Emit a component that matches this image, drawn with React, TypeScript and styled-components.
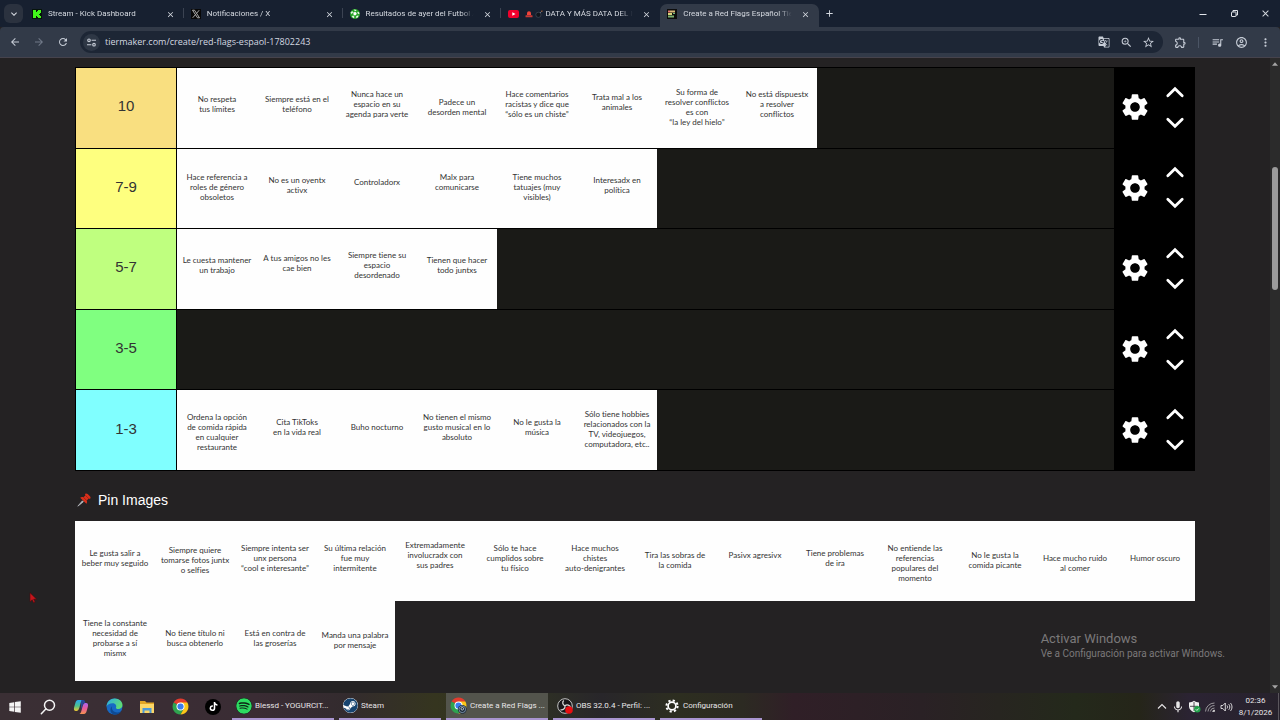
import React from "react";
import styled, { createGlobalStyle, css } from "styled-components";
import {
  MdSettings,
  MdArrowBack,
  MdArrowForward,
  MdRefresh,
  MdOutlineExtension,
  MdStarBorder,
  MdZoomIn,
  MdGTranslate,
  MdMoreVert,
  MdQueueMusic,
  MdOutlineAccountCircle,
  MdMic,
  MdClose,
  MdAdd,
  MdKeyboardArrowDown,
} from "react-icons/md";
import { FaSpotify, FaSteam, FaTiktok } from "react-icons/fa";

const ui = 'Roboto, "Noto Sans", sans-serif';
const addressFont = '"Open Sans", "Noto Sans", sans-serif';
const arial = '"Liberation Sans", Arial, sans-serif';

const Global = createGlobalStyle`
  *, *::before, *::after { box-sizing: border-box; }
  body { margin: 0; background: #242223; font-family: ${ui}; }
  button { padding: 0; border: 0; background: none; color: inherit; font: inherit; cursor: pointer; }
  svg { display: block; flex: none; }
`;

const Screen = styled.div`
  position: relative;
  display: flex;
  flex-direction: column;
  height: 100vh;
  overflow: hidden;
`;

/* ---------- browser chrome ---------- */

const TabStrip = styled.header`
  display: flex;
  flex: none;
  height: 27px;
  padding-left: 4px;
  background: #172030;
  color: #d5d9e0;
`;

const TabSearch = styled.button`
  display: grid;
  place-items: center;
  align-self: center;
  width: 19px;
  height: 19px;
  margin-right: 2px;
  border-radius: 6px;
  background: #2b323f;
`;

const Tabs = styled.div`
  display: flex;
  flex: 0 1 794px;
  min-width: 0;
`;

const Tab = styled.div<{ $active?: boolean; $divider?: boolean }>`
  position: relative;
  display: flex;
  align-items: center;
  flex: 1 1 0;
  gap: 6px;
  min-width: 0;
  height: 23px;
  margin-top: 4px;
  padding: 0 10px 4px 7px;
  ${(p) =>
    p.$active &&
    css`
      border-radius: 7px 7px 0 0;
      background: #323a48;
    `}
  ${(p) =>
    p.$divider &&
    css`
      &::after {
        content: "";
        position: absolute;
        right: 0;
        top: 4px;
        width: 1px;
        height: 10px;
        background: #3b4352;
      }
    `}
`;

const TabTitle = styled.span`
  display: flex;
  align-items: center;
  gap: 2px;
  flex: 1;
  min-width: 0;
  overflow: hidden;
  font-size: 8px;
  line-height: 12px;
  white-space: nowrap;
  mask-image: linear-gradient(to right, #000 86%, transparent 97%);
`;

const IconButton = styled.button<{ $size: number }>`
  display: grid;
  place-items: center;
  align-self: center;
  flex: none;
  width: ${(p) => p.$size}px;
  height: ${(p) => p.$size}px;
`;

const WindowControls = styled.div`
  display: flex;
  align-items: center;
  gap: 11px;
  margin-left: auto;
  padding-right: 5px;
`;

const Toolbar = styled.div`
  display: flex;
  align-items: center;
  flex: none;
  height: 31px;
  padding: 0 5px;
  border-bottom: 1px solid #46434c;
  border-radius: 4px 4px 0 0;
  background: #323a48;
  color: #c6ccd6;
`;

const NavGroup = styled.div`
  display: flex;
  gap: 4px;
  width: 75px;
`;

const Omnibox = styled.div`
  display: flex;
  align-items: center;
  flex: 1;
  height: 22px;
  padding: 0 5px 0 3px;
  border-radius: 11px;
  background: #1d2635;
`;

const SiteInfo = styled.button`
  display: grid;
  place-items: center;
  width: 17px;
  height: 17px;
  border-radius: 50%;
  background: #2e3745;
`;

const Address = styled.input`
  flex: 1;
  min-width: 0;
  padding: 0 0 0 5px;
  border: 0;
  outline: 0;
  background: none;
  color: #d3d8e0;
  font: 9px/14px ${addressFont};
`;

const BoxActions = styled.div`
  display: flex;
  gap: 2px;
`;

const ToolActions = styled.div`
  display: flex;
  align-items: center;
  gap: 4px;
  padding-left: 7px;
`;

const Rule = styled.span`
  width: 1px;
  height: 11px;
  margin: 0 4px;
  background: #4b5565;
`;

/* ---------- page ---------- */

const Viewport = styled.div`
  display: flex;
  flex: 1;
  min-height: 0;
  background: #242223;
`;

const Page = styled.main`
  flex: 1;
  min-width: 0;
  padding: 9px 75px 0;
  overflow: hidden;
`;

const TierList = styled.section`
  display: grid;
  grid-auto-rows: 1fr;
  gap: 1px;
  min-height: 404px;
  padding: 1px 0 1px 1px;
  background: #000;
`;

const TierRow = styled.div`
  display: grid;
  grid-template-columns: 100px 1fr 80px;
  column-gap: 1px;
  min-height: 79px;
`;

const TierLabel = styled.div<{ $color: string }>`
  display: grid;
  place-items: center;
  padding-bottom: 3px;
  background: ${(p) => p.$color};
  color: #333;
  font: 15px/20px ${arial};
`;

const Cards = styled.ul<{ $wrap?: boolean }>`
  display: flex;
  flex-wrap: ${(p) => (p.$wrap ? "wrap" : "nowrap")};
  min-width: 0;
  margin: 0;
  padding: 0;
  list-style: none;
  background: ${(p) => (p.$wrap ? "none" : "#1a1a17")};
`;

type Level = "high" | "mid" | "low" | "base";

const levelPadding: Record<Level, string> = {
  high: "0 0 12px",
  mid: "0 0 7px",
  low: "0 0 2px",
  base: "3px 0 0",
};

const Card = styled.li<{ $level: Level; $tall?: boolean }>`
  display: grid;
  place-items: center;
  flex: none;
  width: 80px;
  min-height: ${(p) => (p.$tall ? 80 : 79)}px;
  padding: ${(p) => levelPadding[p.$level]};
  background: #fefefe;
  color: #333;
  font: 8px/10px Lato, ${ui};
  font-variant-ligatures: none;
  text-align: center;
  white-space: pre;
`;

const RowTools = styled.div`
  display: grid;
  grid-template-columns: 39px 41px;
  align-items: center;
  justify-items: center;
  padding-bottom: 1px;
  color: #fff;
`;

const Arrows = styled.div`
  display: grid;
  gap: 13px;
`;

const ArrowButton = styled.button`
  display: grid;
  place-items: center;
  width: 20px;
  height: 18px;
`;

const PinHeading = styled.h2`
  display: flex;
  align-items: center;
  gap: 7px;
  margin: 0;
  padding: 20px 0 12px 2px;
  color: #fff;
  font: 14px/18px ${arial};
`;

const ScrollTrack = styled.div`
  display: flex;
  flex-direction: column;
  justify-content: space-between;
  align-items: center;
  position: relative;
  flex: none;
  width: 10px;
  padding: 4px 0;
  background: #2b2b2b;
`;

const ScrollThumb = styled.div`
  position: absolute;
  top: 109px;
  left: 2px;
  width: 6px;
  height: 123px;
  border-radius: 3px;
  background: #9c9c9c;
`;

const Watermark = styled.div`
  position: absolute;
  right: 55px;
  bottom: 59px;
  color: #7b797a;
`;

const WatermarkTitle = styled.div`
  font-size: 13px;
  line-height: 16px;
`;

const WatermarkText = styled.div`
  font-size: 10px;
  line-height: 14px;
`;

const Pointer = styled.div`
  position: absolute;
  left: 29px;
  top: 592px;
`;

/* ---------- taskbar ---------- */

const Taskbar = styled.footer`
  display: flex;
  align-items: stretch;
  flex: none;
  height: 27px;
  background: linear-gradient(
    to right,
    #3a2f34 0%,
    #3a2c34 20%,
    #332b2e 27%,
    #35351f 34%,
    #2e3024 42%,
    #28262a 47%,
    #2d2e20 53%,
    #2c2a22 58%,
    #301f27 62%,
    #2a2125 72%,
    #24291b 84%,
    #252519 89%,
    #2b2333 93%,
    #27222c 100%
  );
  color: #e8e6e8;
  font-size: 8px;
  line-height: 12px;
`;

const Launchers = styled.nav`
  display: flex;
  align-items: center;
  gap: 13px;
  padding: 0 9px 0 5px;
`;

const Tasks = styled.div`
  display: flex;
  gap: 5px;
  flex: 1;
  min-width: 0;
`;

const Task = styled.button<{ $active?: boolean }>`
  display: flex;
  align-items: center;
  gap: 3px;
  flex: none;
  width: 102px;
  padding-left: 4px;
  border-bottom: 2px solid #a995d0;
  background: ${(p) => (p.$active ? "#53544c" : "none")};
  white-space: nowrap;
`;

const Tray = styled.div`
  display: flex;
  align-items: center;
  gap: 2px;
  padding-right: 1px;
`;

const Clock = styled.time`
  width: 41px;
  font-size: 8px;
  line-height: 12px;
  text-align: center;
`;

const DesktopEdge = styled.span`
  width: 1px;
  height: 100%;
  background: #5a565c;
`;

/* ---------- drawings ---------- */

const KickIcon = () => (
  <svg width="10" height="10" viewBox="0 0 10 10">
    <rect width="10" height="10" fill="#06140a" />
    <path d="M1 1h3v2h1V2h1V1h3v3H8v1H7v1h1v1h1v2H6V8H5V7H4v2H1z" fill="#42f51b" />
  </svg>
);

const XIcon = () => (
  <svg width="10" height="10" viewBox="0 0 10 10">
    <rect width="10" height="10" fill="#080808" />
    <path d="M1.500 1.200h2l5 7.600h-2zM8.200 1.200 5.500 4.400M4.400 5.700 1.700 8.800" fill="none" stroke="#d0d0d0" strokeWidth=".8" />
  </svg>
);

const BallIcon = () => (
  <svg width="10" height="10" viewBox="0 0 10 10">
    <circle cx="5" cy="5" r="5" fill="#22a322" />
    <path d="M3.600 3.600 5.300 3l1.200 1.300-.7 1.700-1.900.1zM4.200.8l2 .4-.8.900zM1 3.500l1.200-1.200.5 1.400-1.200 1.100zM2 7.300l1.600-.4.500 1.700-1 .2zM6.500 7.300l1.700-.6-.6 1.600-1.300.5zM7.700 3l.9.200.6 1.600-1.200-.3z" fill="#fff" stroke="#fff" strokeWidth=".5" />
  </svg>
);

const YoutubeIcon = () => (
  <svg width="11" height="10" viewBox="0 0 11 10">
    <rect y="1" width="11" height="8" rx="2" fill="#f0002c" />
    <path d="M4.300 3.200v3.600L7.500 5z" fill="#fff" />
  </svg>
);

const TierIcon = () => (
  <svg width="10" height="10" viewBox="0 0 10 10">
    <rect width="10" height="10" fill="#0c0c0c" />
    <path d="M1 1.500h2v2H1z" fill="#e67a70" />
    <path d="M3 1.500h5v2H3z" fill="#d9b878" />
    <path d="M1 4h4v2H1z" fill="#d8d27a" />
    <path d="M6 4h2v1H6z" fill="#6fbb7b" />
    <path d="M1 6.500h6v2H1z" fill="#7cb070" />
  </svg>
);

const SirenIcon = () => (
  <svg width="8" height="8" viewBox="0 0 8 8">
    <path d="M2 5V3.200a2 2 0 0 1 4 0V5z" fill="#f1433a" />
    <rect x=".5" y="5.300" width="7" height="1.900" rx=".5" fill="#c93a36" />
  </svg>
);

const BombIcon = () => (
  <svg width="8" height="8" viewBox="0 0 8 8">
    <circle cx="3.400" cy="4.800" r="2.600" fill="#10151c" stroke="#596270" strokeWidth=".5" />
    <path d="m5 3 1.600-1.700" stroke="#7d8490" strokeWidth=".8" />
    <circle cx="6.900" cy="1.100" r=".7" fill="#cf6a2c" />
  </svg>
);

const TuneIcon = () => (
  <svg width="11" height="11" viewBox="0 0 11 11" fill="none" stroke="#c6ccd6" strokeWidth="1.100">
    <circle cx="3" cy="3.300" r="1.300" />
    <path d="M5.600 3.300H10M1 7.700h4.400" />
    <circle cx="8" cy="7.700" r="1.300" />
  </svg>
);

const MinimizeIcon = () => (
  <svg width="8" height="8" viewBox="0 0 8 8">
    <path d="M.5 4.500h7" stroke="#e2e5ea" />
  </svg>
);

const RestoreIcon = () => (
  <svg width="9" height="9" viewBox="0 0 9 9" fill="none" stroke="#e2e5ea">
    <rect x="1.500" y="3" width="4.500" height="4.500" rx=".5" />
    <path d="M3 3V1.500h4.500V6H6" />
  </svg>
);

const Chevron = ({ down = false }: { down?: boolean }) => (
  <svg width="20" height="12" viewBox="0 0 20 12" fill="none" stroke="#fff" strokeWidth="2.800" strokeLinecap="round">
    <path d={down ? "m2.800 2.200 7.200 7 7.200-7" : "m2.800 9.800 7.200-7 7.200 7"} />
  </svg>
);

const PinIcon = () => (
  <svg width="14" height="14" viewBox="0 0 14 14">
    <path d="m.8 13.200 4.600-5.400 1 1z" fill="#b9bcc0" stroke="#b9bcc0" strokeWidth=".7" />
    <path d="M8.400.7c.7-.5 1.600-.2 2.300.4l2.200 2.200c.7.700.900 1.600.4 2.200-.500.500-1.100.4-1.700.1L9.800 7.600c.5 1.200.4 2.300-.4 3.200L3.200 4.700c.9-.8 2-.9 3.200-.4l2-1.900c-.4-.600-.500-1.200 0-1.700z" fill="#d9301b" />
    <path d="m6.400 4.300 3.400 3.300M8.600 2.500l2.900 2.900" stroke="#8e1a10" strokeWidth=".7" />
  </svg>
);

const Triangle = ({ down = false }: { down?: boolean }) => (
  <svg width="6" height="4" viewBox="0 0 6 4">
    <path d={down ? "M0 .3h6L3 3.700z" : "M0 3.700h6L3 .3z"} fill="#a5a5a5" />
  </svg>
);

const WindowsIcon = () => (
  <svg width="12" height="12" viewBox="0 0 12 12" fill="#f4f4f4">
    <path d="M.3 1.900 5.200 1.200v4.500H.3zM5.900 1.100 11.800.2v5.500H5.900zM.3 6.300h4.900v4.500L.3 10.100zM5.900 6.300h5.900v5.500l-5.900-.9z" />
  </svg>
);

const SearchIcon = () => (
  <svg width="16" height="16" viewBox="0 0 16 16" fill="none" stroke="#f4f4f4" strokeWidth="1.500" strokeLinecap="round">
    <circle cx="9.500" cy="6.300" r="5" />
    <path d="m5.800 10-4.500 4.800" />
  </svg>
);

const CopilotIcon = () => (
  <svg width="16" height="16" viewBox="0 0 16 16">
    <defs>
      <linearGradient id="cpA" x1="0" y1="0" x2="0" y2="1">
        <stop offset="0" stopColor="#28a8f0" />
        <stop offset=".55" stopColor="#4fc38a" />
        <stop offset="1" stopColor="#f2c931" />
      </linearGradient>
      <linearGradient id="cpB" x1="0" y1="0" x2="0" y2="1">
        <stop offset="0" stopColor="#a966f0" />
        <stop offset=".5" stopColor="#e95b9b" />
        <stop offset="1" stopColor="#f5934e" />
      </linearGradient>
    </defs>
    <path d="M5 1h4.500C8 1.500 7.700 4 6.900 6.800 6.200 9.500 5.600 12 3.600 12H3C.8 12 .6 10 1.200 8l1.300-4.500C3 2 3.700 1 5 1z" fill="url(#cpA)" />
    <path d="M11 15H6.500C8 14.500 8.300 12 9.100 9.200 9.800 6.500 10.400 4 12.400 4h.6c2.200 0 2.400 2 1.800 4l-1.300 4.500c-.5 1.500-1.200 2.500-2.500 2.500z" fill="url(#cpB)" />
    <path d="M8 1h2.500c1 0 1.500 1 1.800 3-2 0-2.800 2-3.400 4.300L8 11" fill="#2350b8" opacity=".75" />
  </svg>
);

const EdgeIcon = () => (
  <svg width="17" height="17" viewBox="0 0 17 17">
    <defs>
      <linearGradient id="edA" x1="0" y1="0" x2="1" y2=".5">
        <stop offset="0" stopColor="#2aa9e8" />
        <stop offset="1" stopColor="#5fdc74" />
      </linearGradient>
    </defs>
    <circle cx="8.500" cy="8.500" r="8" fill="#1769c4" />
    <path d="M.5 8.500C.8 3.500 4.500.5 8.700.5c4.700 0 7.800 3.300 7.800 6.600 0 2.600-2 4-4.200 4-1.700 0-2.600-.7-2.300-1.500.8-1.700-.2-4.400-3.300-4.400C3.500 5.200 1.300 6.800.5 8.500z" fill="url(#edA)" />
    <path d="M6.200 8c-1.300 3.300 1.300 6.600 5.200 6.400 1.700-.1 2.900-.7 4-1.700-1.700 3.200-5 4.500-8 3.700C3.800 14.800 3.500 10.500 6.200 8z" fill="#0e4a94" />
  </svg>
);

const FolderIcon = () => (
  <svg width="16" height="14" viewBox="0 0 16 14">
    <path d="M1 1h5l1.500 1.500H15V13H1z" fill="#e0a526" />
    <path d="M1 4h14v9H1z" fill="#fbd667" />
    <path d="M3.500 8h9v5h-2v-2.500h-5V13h-2z" fill="#4c9ad8" />
  </svg>
);

const ChromeIcon = ({ badge = false }: { badge?: boolean }) => (
  <svg width="17" height="17" viewBox="0 0 17 17">
    <path d="M8.500 8.500 1.600 4.500a8 8 0 0 1 13.800 0z" fill="#e33b2e" />
    <path d="M8.500 8.500 1.600 4.500a8 8 0 0 0 6.900 12l3.500-6z" fill="#2fa34f" />
    <path d="M8.500 4.500h6.900a8 8 0 0 1-6.900 12l3.500-6z" fill="#fbc719" />
    <circle cx="8.500" cy="8.500" r="4" fill="#fff" />
    <circle cx="8.500" cy="8.500" r="3.100" fill="#3b7ded" />
    {badge && (
      <g>
        <circle cx="12.300" cy="12.300" r="4.400" fill="#1c2a3a" />
        <circle cx="12.300" cy="12.300" r="3.300" fill="none" stroke="#9fb6cf" strokeWidth=".7" />
        <circle cx="12.300" cy="11.800" r="1.300" fill="none" stroke="#d5e2f0" strokeWidth=".8" />
      </g>
    )}
  </svg>
);

const TiktokDisc = styled.span`
  display: grid;
  place-items: center;
  width: 16px;
  height: 16px;
  border-radius: 50%;
  background: #000;
  color: #fff;
`;

const TiktokIcon = () => (
  <TiktokDisc>
    <FaTiktok size={9} />
  </TiktokDisc>
);

const SpotifyIcon = styled(FaSpotify)`
  border-radius: 50%;
  background: #0d2415;
  color: #2ddb61;
`;

const SteamIcon = styled(FaSteam)`
  border-radius: 50%;
  background: #fff;
  color: #17446f;
`;

const ObsIcon = () => (
  <svg width="16" height="16" viewBox="0 0 16 16">
    <circle cx="8" cy="8" r="7.300" fill="#171719" stroke="#d6d6d6" strokeWidth=".9" />
    <path d="M8 7.800C5.500 7 5 4 6.800 2.500M8 7.800c2-1.700 5-.6 5.500 1.700M8 7.800c.4 2.600-2 4.700-4.600 4" fill="none" stroke="#d6d6d6" strokeWidth="1.300" />
    <circle cx="12" cy="12" r="3.800" fill="#e80e12" />
  </svg>
);

const CogIcon = () => (
  <svg width="16" height="14" viewBox="-1 0 16 14" fill="none" stroke="#fff">
    <circle cx="7" cy="7" r="3.900" strokeWidth="1.700" />
    <circle cx="7" cy="7" r="5.600" strokeWidth="2" strokeDasharray="2.200 2.198" />
  </svg>
);

const ShieldIcon = () => (
  <svg width="13" height="13" viewBox="0 0 13 13">
    <path d="M6 .8c1.500 1.100 3 1.500 5 1.600v3.800C11 9 9 11 6 12.200 3 11 1 9 1 6.200V2.400C3 2.300 4.500 1.900 6 .8z" fill="#f2f2f2" />
    <path d="M6 2v9M2 6.300h8" stroke="#2b2830" strokeWidth=".8" />
    <circle cx="9.300" cy="9.300" r="3.200" fill="#21a04a" />
    <path d="m7.800 9.300 1.100 1.100 1.900-2" fill="none" stroke="#fff" strokeWidth=".8" />
  </svg>
);

const WifiIcon = () => (
  <svg width="12" height="12" viewBox="0 0 12 12" fill="none" stroke="#9a979c">
    <path d="M1.500 10.500a9 9 0 0 1 9-8.500M4 10.500A6.500 6.500 0 0 1 10.500 4.500M6.300 10.500A4.200 4.200 0 0 1 10.500 7" />
    <path d="M8.600 10.500a2 2 0 0 1 1.900-1.500v1.500z" fill="#e8e8e8" stroke="#e8e8e8" strokeWidth=".6" />
  </svg>
);

const VolumeIcon = () => (
  <svg width="13" height="12" viewBox="0 0 13 12" fill="none" stroke="#e8e6e8" strokeWidth=".9">
    <path d="M1 4.500h1.800L5.300 2v8L2.800 7.500H1z" />
    <path d="M7 4.500c.7.800.7 2.200 0 3M8.700 3.200c1.500 1.500 1.500 4.100 0 5.600M10.400 2c2.100 2.200 2.100 5.800 0 8" />
  </svg>
);

const CaretIcon = () => (
  <svg width="10" height="7" viewBox="0 0 10 7" fill="none" stroke="#e8e6e8" strokeWidth="1.100">
    <path d="m1 5.500 4-4 4 4" />
  </svg>
);

/* ---------- data ---------- */

type CardData = [text: string, level: Level];

const tiers: { label: string; color: string; cards: CardData[] }[] = [
  {
    label: "10",
    color: "#f9df80",
    cards: [
      ["No respeta\ntus límites", "mid"],
      ["Siempre está en el\nteléfono", "mid"],
      ["Nunca hace un\nespacio en su\nagenda para verte", "mid"],
      ["Padece un\ndesorden mental", "low"],
      ["Hace comentarios\nracistas y dice que\n“sólo es un chiste”", "mid"],
      ["Trata mal a los\nanimales", "high"],
      ["Su forma de\nresolver conflictos\nes con\n“la ley del hielo”", "low"],
      ["No está dispuestx\na resolver\nconflictos", "mid"],
    ],
  },
  {
    label: "7-9",
    color: "#feff7f",
    cards: [
      ["Hace referencia a\nroles de género\nobsoletos", "low"],
      ["No es un oyentx\nactivx", "mid"],
      ["Controladorx", "high"],
      ["Malx para\ncomunicarse", "high"],
      ["Tiene muchos\ntatuajes (muy\nvisibles)", "low"],
      ["Interesadx en\npolítica", "mid"],
    ],
  },
  {
    label: "5-7",
    color: "#bfff7f",
    cards: [
      ["Le cuesta mantener\nun trabajo", "mid"],
      ["A tus amigos no les\ncae bien", "high"],
      ["Siempre tiene su\nespacio\ndesordenado", "mid"],
      ["Tienen que hacer\ntodo juntxs", "mid"],
    ],
  },
  { label: "3-5", color: "#80ff80", cards: [] },
  {
    label: "1-3",
    color: "#80ffff",
    cards: [
      ["Ordena la opción\nde comida rápida\nen cualquier\nrestaurante", "base"],
      ["Cita TikToks\nen la vida real", "mid"],
      ["Buho nocturno", "mid"],
      ["No tienen el mismo\ngusto musical en lo\nabsoluto", "mid"],
      ["No le gusta la\nmúsica", "mid"],
      ["Sólo tiene hobbies\nrelacionados con la\nTV, videojuegos,\ncomputadora, etc..", "low"],
    ],
  },
];

const pins: CardData[] = [
  ["Le gusta salir a\nbeber muy seguido", "mid"],
  ["Siempre quiere\ntomarse fotos juntx\no selfies", "low"],
  ["Siempre intenta ser\nunx persona\n“cool e interesante”", "mid"],
  ["Su última relación\nfue muy\nintermitente", "mid"],
  ["Extremadamente\ninvolucradx con\nsus padres", "high"],
  ["Sólo te hace\ncumplidos sobre\ntu físico", "mid"],
  ["Hace muchos\nchistes\nauto-denigrantes", "mid"],
  ["Tira las sobras de\nla comida", "low"],
  ["Pasivx agresivx", "high"],
  ["Tiene problemas\nde ira", "mid"],
  ["No entiende las\nreferencias\npopulares del\nmomento", "base"],
  ["No le gusta la\ncomida picante", "low"],
  ["Hace mucho ruido\nal comer", "base"],
  ["Humor oscuro", "mid"],
  ["Tiene la constante\nnecesidad de\nprobarse a sí\nmismx", "mid"],
  ["No tiene título ni\nbusca obtenerlo", "mid"],
  ["Está en contra de\nlas groserías", "mid"],
  ["Manda una palabra\npor mensaje", "low"],
];

const tabs: { icon: React.ReactNode; title: React.ReactNode; divider?: boolean; active?: boolean }[] = [
  { icon: <KickIcon />, title: "Stream - Kick Dashboard", divider: true },
  { icon: <XIcon />, title: "Notificaciones / X", divider: true },
  { icon: <BallIcon />, title: "Resultados de ayer del Futbol A", divider: true },
  {
    icon: <YoutubeIcon />,
    title: (
      <>
        <SirenIcon />
        <BombIcon />
        DATA Y MÁS DATA DEL M
      </>
    ),
  },
  { icon: <TierIcon />, title: "Create a Red Flags Español Tier", active: true },
];

const tasks: { icon: React.ReactNode; title: string; active?: boolean }[] = [
  { icon: <SpotifyIcon size={16} />, title: "Blessd - YOGURCIT..." },
  { icon: <SteamIcon size={15} />, title: "Steam" },
  { icon: <ChromeIcon badge />, title: "Create a Red Flags ...", active: true },
  { icon: <ObsIcon />, title: "OBS 32.0.4 - Perfil: ..." },
  { icon: <CogIcon />, title: "Configuración" },
];

const launchers: [string, React.ReactNode][] = [
  ["Inicio", <WindowsIcon />],
  ["Buscar", <SearchIcon />],
  ["Copilot", <CopilotIcon />],
  ["Edge", <EdgeIcon />],
  ["Explorador", <FolderIcon />],
  ["Chrome", <ChromeIcon />],
  ["TikTok", <TiktokIcon />],
];

export default function App() {
  return (
    <Screen>
      <Global />
      <TabStrip>
        <TabSearch aria-label="Buscar pestañas">
          <MdKeyboardArrowDown size={12} />
        </TabSearch>
        <Tabs>
          {tabs.map((t, i) => (
            <Tab key={i} $active={t.active} $divider={t.divider}>
              {t.icon}
              <TabTitle>{t.title}</TabTitle>
              <IconButton $size={8} aria-label="Cerrar pestaña">
                <MdClose size={9} />
              </IconButton>
            </Tab>
          ))}
        </Tabs>
        <IconButton $size={20} aria-label="Nueva pestaña">
          <MdAdd size={11} />
        </IconButton>
        <WindowControls>
          <IconButton $size={20} aria-label="Minimizar">
            <MinimizeIcon />
          </IconButton>
          <IconButton $size={20} aria-label="Restaurar">
            <RestoreIcon />
          </IconButton>
          <IconButton $size={20} aria-label="Cerrar">
            <MdClose size={11} />
          </IconButton>
        </WindowControls>
      </TabStrip>
      <Toolbar>
        <NavGroup>
          <IconButton $size={20} aria-label="Atrás">
            <MdArrowBack size={12} />
          </IconButton>
          <IconButton $size={20} aria-label="Adelante">
            <MdArrowForward size={12} color="#707988" />
          </IconButton>
          <IconButton $size={20} aria-label="Recargar">
            <MdRefresh size={12} />
          </IconButton>
        </NavGroup>
        <Omnibox>
          <SiteInfo aria-label="Información del sitio">
            <TuneIcon />
          </SiteInfo>
          <Address aria-label="Dirección" defaultValue="tiermaker.com/create/red-flags-espaol-17802243" />
          <BoxActions>
            <IconButton $size={20} aria-label="Traducir">
              <MdGTranslate size={12} />
            </IconButton>
            <IconButton $size={20} aria-label="Zoom">
              <MdZoomIn size={13} />
            </IconButton>
            <IconButton $size={20} aria-label="Favorito">
              <MdStarBorder size={13} />
            </IconButton>
          </BoxActions>
        </Omnibox>
        <ToolActions>
          <IconButton $size={20} aria-label="Extensiones">
            <MdOutlineExtension size={13} />
          </IconButton>
          <Rule />
          <IconButton $size={20} aria-label="Multimedia">
            <MdQueueMusic size={13} />
          </IconButton>
          <IconButton $size={20} aria-label="Perfil">
            <MdOutlineAccountCircle size={13} />
          </IconButton>
          <IconButton $size={20} aria-label="Menú">
            <MdMoreVert size={13} />
          </IconButton>
        </ToolActions>
      </Toolbar>
      <Viewport>
        <Page>
          <TierList>
            {tiers.map((tier) => (
              <TierRow key={tier.label}>
                <TierLabel $color={tier.color}>{tier.label}</TierLabel>
                <Cards>
                  {tier.cards.map(([text, level]) => (
                    <Card key={text} $level={level}>
                      {text}
                    </Card>
                  ))}
                </Cards>
                <RowTools>
                  <button aria-label={`Configurar ${tier.label}`}>
                    <MdSettings size={32} />
                  </button>
                  <Arrows>
                    <ArrowButton aria-label="Subir fila">
                      <Chevron />
                    </ArrowButton>
                    <ArrowButton aria-label="Bajar fila">
                      <Chevron down />
                    </ArrowButton>
                  </Arrows>
                </RowTools>
              </TierRow>
            ))}
          </TierList>
          <PinHeading>
            <PinIcon />
            Pin Images
          </PinHeading>
          <Cards $wrap>
            {pins.map(([text, level]) => (
              <Card key={text} $level={level} $tall>
                {text}
              </Card>
            ))}
          </Cards>
        </Page>
        <ScrollTrack>
          <Triangle />
          <ScrollThumb />
          <Triangle down />
        </ScrollTrack>
      </Viewport>
      <Taskbar>
        <Launchers>
          {launchers.map(([name, icon]) => (
            <IconButton key={name} $size={20} aria-label={name}>
              {icon}
            </IconButton>
          ))}
        </Launchers>
        <Tasks>
          {tasks.map((t) => (
            <Task key={t.title} $active={t.active}>
              {t.icon}
              {t.title}
            </Task>
          ))}
        </Tasks>
        <Tray>
          <IconButton $size={14} aria-label="Mostrar iconos ocultos">
            <CaretIcon />
          </IconButton>
          <IconButton $size={14} aria-label="Micrófono">
            <MdMic size={14} />
          </IconButton>
          <IconButton $size={14} aria-label="Seguridad">
            <ShieldIcon />
          </IconButton>
          <IconButton $size={14} aria-label="Red">
            <WifiIcon />
          </IconButton>
          <IconButton $size={14} aria-label="Volumen">
            <VolumeIcon />
          </IconButton>
          <Clock dateTime="2026-01-08T02:36">
            02:36
            <br />
            8/1/2026
          </Clock>
          <DesktopEdge />
        </Tray>
      </Taskbar>
      <Watermark>
        <WatermarkTitle>Activar Windows</WatermarkTitle>
        <WatermarkText>Ve a Configuración para activar Windows.</WatermarkText>
      </Watermark>
      <Pointer>
        <svg width="9" height="12" viewBox="0 0 9 12">
          <path d="M1 .8v9l2.200-2 1.400 3 1.500-.7-1.400-2.900h3z" fill="#c4161c" stroke="#4a0c0e" strokeWidth=".6" />
        </svg>
      </Pointer>
    </Screen>
  );
}
